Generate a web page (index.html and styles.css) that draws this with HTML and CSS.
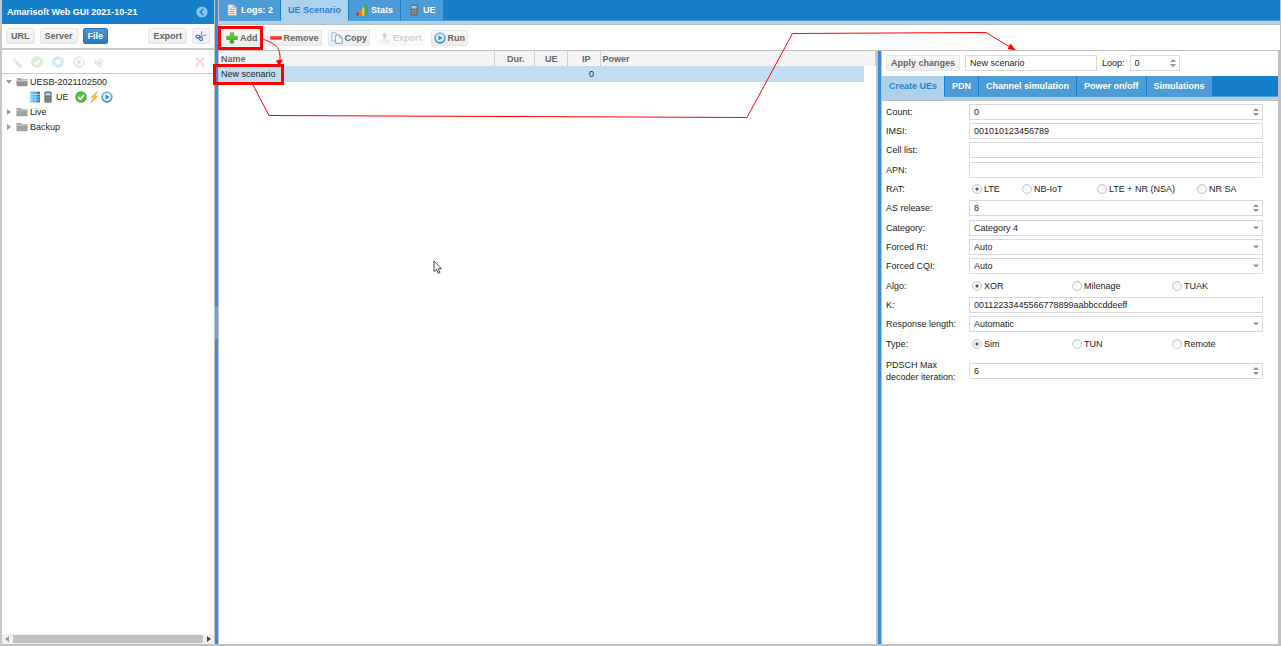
FILE: index.html
```html
<!DOCTYPE html>
<html lang="en">
<head>
<meta charset="utf-8">
<title>Amarisoft Web GUI</title>
<link rel="stylesheet" href="styles.css">
</head>
<body>
<svg class="defs" aria-hidden="true">
  <defs>
    <linearGradient id="gplus" x1="0" y1="0" x2="0" y2="1"><stop offset="0" stop-color="#7ed957"/><stop offset="1" stop-color="#2e9e1a"/></linearGradient>
    <linearGradient id="gblue" x1="0" y1="0" x2="0" y2="1"><stop offset="0" stop-color="#7cc0ea"/><stop offset="1" stop-color="#2f86c5"/></linearGradient>
    <linearGradient id="gserver" x1="0" y1="0" x2="1" y2="0"><stop offset="0" stop-color="#8fd3f7"/><stop offset="1" stop-color="#1478c4"/></linearGradient>
  </defs>
  <symbol id="i-run" viewBox="0 0 12 12"><circle cx="6" cy="6" r="5.7" fill="url(#gblue)"/><circle cx="6" cy="6" r="4" fill="#e3f3fc"/><path d="M4.5 3.4 8.6 6 4.500 8.600z" fill="#2b8acb"/></symbol>
  <symbol id="i-ok" viewBox="0 0 12 12"><circle cx="6" cy="6" r="5.700" fill="#2f9a22"/><circle cx="6" cy="6" r="4.800" fill="#62c04a"/><path d="M3.200 6.200 5.200 8.200 9 4" fill="none" stroke="#fff" stroke-width="1.700"/></symbol>
  <symbol id="i-bolt" viewBox="0 0 12 12"><path d="M9.600.4 3 6.500 5.600 7 3.200 11.700 9.400 5.400 6.600 4.900z" fill="#ffc928" stroke="#f29a1c" stroke-width=".7"/></symbol>
  <symbol id="i-plus" viewBox="0 0 12 12"><path d="M4.200.8h3.400v3.500h3.700v3.200H7.600v3.700H4.200V7.500H.6V4.300h3.600z" fill="url(#gplus)" stroke="#3d9a2b" stroke-width=".6"/></symbol>
  <symbol id="i-minus" viewBox="0 0 12 12"><path d="M.3 4h11.400v3.600H.3z" fill="#e0281e"/><path d="M.8 4.400h10.400v1.200H.8z" fill="#f5796c"/></symbol>
  <symbol id="i-copy" viewBox="0 0 12 12"><path d="M.8.8h4l2 2v6h-6z" fill="#eaf5fb" stroke="#7fb0cc" stroke-width=".8"/><path d="M4.600 3.200h4.200l2.400 2.300v5.800H4.600z" fill="#f4fafe" stroke="#5f93b5" stroke-width=".8"/><path d="M8.600 3.300v2.400h2.500" fill="none" stroke="#5f93b5" stroke-width=".8"/></symbol>
  <symbol id="i-export" viewBox="0 0 12 12"><path d="M5.500.5 8.700 4H6.900v3.200H4.200V4H2.300z" fill="#46a838"/><path d="M1 8h10v3H1z" fill="#b0b0b0"/><path d="M2 9.400h6" stroke="#fff" stroke-width=".8"/></symbol>
  <symbol id="i-doc" viewBox="0 0 12 12"><path d="M2 .8h5.400l3 2.900v7.600H2z" fill="#f4f0e8" stroke="#a9b3bb" stroke-width=".7"/><path d="M7.200.9v3h3" fill="#d6d0c4" stroke="#9aa4ac" stroke-width=".6"/><path d="M3.600 4h2.600M3.600 5.800h5M3.600 7.600h5M3.600 9.400h5" stroke="#8c98a4" stroke-width=".8"/></symbol>
  <symbol id="i-stats" viewBox="0 0 12 12"><path d="M.4 8.600h2.300v3H.4z" fill="#b33a2b"/><path d="M3.200 6.300h2.300v5.300H3.200z" fill="#ef7d1a"/><path d="M6 3.500h2.400v8.100H6z" fill="#f7c832"/><path d="M8.900.5h2.600v11.100H8.900z" fill="#4aa93b"/></symbol>
  <symbol id="i-phone" viewBox="0 0 12 12"><rect x="2.400" y=".6" width="7.200" height="11" rx="1" fill="#5b6670"/><path d="M3.400 1.800h5.200v2.800H3.400z" fill="#a9cfe8"/><path d="M3.600 6.200h4.800M3.600 8h4.800M3.600 9.800h4.800" stroke="#c4ccd2" stroke-width=".8" stroke-dasharray="1.2 .6"/></symbol>
  <symbol id="i-server" viewBox="0 0 12 12"><path d="M1 .6h10v10.800H1z" fill="url(#gserver)"/><path d="M1 3.400h10M1 6.100h10M1 8.800h10" stroke="#e4f5ff" stroke-width=".6"/><path d="M6.600.6v10.800" stroke="#bfe4fa" stroke-width=".6"/></symbol>
  <symbol id="i-folder" viewBox="0 0 12 10"><path d="M.5 1h4.300l1 1.200h5.700v7H.5z" fill="#a2a2a2"/><path d="M.5 3.100h11" stroke="#d4d4d4" stroke-width=".8"/></symbol>
  <symbol id="i-open" viewBox="0 0 12 10"><path d="M.8 1h4l1 1.200h5.600v6.900H.8z" fill="#a8a8a8"/><path d="M.2 4.200h11.600L11 9.200H1z" fill="#929292"/><path d="M.3 3.800h11.400" stroke="#e0e0e0" stroke-width=".8"/></symbol>
  <symbol id="i-cut" viewBox="0 0 12 12"><path d="M6.900 1.200 6 7.400" stroke="#8fa3b5" stroke-width="1.300" fill="none"/><path d="M11.400 5 4.400 6.400" stroke="#a9b4be" stroke-width="1.500" fill="none"/><ellipse cx="2.900" cy="6.600" rx="1.900" ry="1.400" fill="none" stroke="#3f7fc4" stroke-width="1.300"/><ellipse cx="6" cy="9" rx="1.500" ry="1.600" fill="none" stroke="#3f7fc4" stroke-width="1.300"/></symbol>
  <symbol id="i-wrench" viewBox="0 0 12 12"><path d="M6 6 10.400 10.200" stroke="#2f7fd6" stroke-width="2.800" stroke-linecap="round"/><path d="M4 4 6.500 6.500" stroke="#9aa7b2" stroke-width="1.600"/><path d="M.8 3.400a2.500 2.500 0 0 0 4.500 1A2.500 2.500 0 0 0 3.200.8L3.900 2.600 2.600 3.800z" fill="#9aa7b2"/></symbol>
  <symbol id="i-sync" viewBox="0 0 12 12"><path d="M1.700 6.600a4.200 4.200 0 0 1 7-3.600M10.300 5.400a4.200 4.200 0 0 1-7 3.600" fill="none" stroke="#3f90d6" stroke-width="3"/><path d="M6.900 5.600h4.700V.9zM5.100 6.400H.4v4.700z" fill="#3f90d6"/></symbol>
  <symbol id="i-x" viewBox="0 0 12 12"><path d="M1.500 1.500 10.500 10.500M10.500 1.500 1.500 10.500" stroke="#f0402c" stroke-width="2"/></symbol>
  <symbol id="i-collapse" viewBox="0 0 12 12"><circle cx="6" cy="6" r="5.600" fill="#8dc3e8"/><path d="M7.400 3 4.400 6l3 3" fill="none" stroke="#157fcc" stroke-width="1.600"/></symbol>
  <symbol id="i-down" viewBox="0 0 6 8"><path d="M0 2.500h6L3 5.500z" fill="#8f8f8f"/></symbol>
  <symbol id="i-spin" viewBox="0 0 6 8"><path d="M0 3h6L3 0zM0 5h6L3 8z" fill="#8f8f8f"/></symbol>
</svg>

<div class="app">
  <aside class="side">
    <header class="side-head"><h1>Amarisoft Web GUI 2021-10-21</h1><button class="plain" aria-label="Collapse"><svg class="ic"><use href="#i-collapse"/></svg></button></header>
    <div class="side-bar">
      <button class="btn">URL</button><button class="btn">Server</button><button class="btn on">File</button>
      <button class="btn push">Export</button><button class="btn square" aria-label="Cut"><svg class="ic"><use href="#i-cut"/></svg></button>
    </div>
    <div class="side-tools">
      <button class="plain" disabled aria-label="Configure"><svg class="ic"><use href="#i-wrench"/></svg></button>
      <button class="plain" disabled aria-label="Enable"><svg class="ic"><use href="#i-ok"/></svg></button>
      <button class="plain" disabled aria-label="Refresh"><svg class="ic"><use href="#i-sync"/></svg></button>
      <button class="plain" disabled aria-label="Run"><svg class="ic"><use href="#i-run"/></svg></button>
      <button class="plain" disabled aria-label="Cut"><svg class="ic"><use href="#i-cut"/></svg></button>
      <button class="plain push" disabled aria-label="Delete"><svg class="ic"><use href="#i-x"/></svg></button>
    </div>
    <ul class="tree">
      <li><svg class="tw" viewBox="0 0 6 6"><path d="M0 1h6L3 5z"/></svg><svg class="fold"><use href="#i-open"/></svg>UESB-2021102500</li>
      <li class="leaf"><svg class="ic"><use href="#i-server"/></svg><svg class="ic"><use href="#i-phone"/></svg><span class="name">UE</span><svg class="ic"><use href="#i-ok"/></svg><svg class="ic"><use href="#i-bolt"/></svg><svg class="ic"><use href="#i-run"/></svg></li>
      <li><svg class="tw" viewBox="0 0 6 6"><path d="M1 0v6L5 3z"/></svg><svg class="fold"><use href="#i-folder"/></svg>Live</li>
      <li><svg class="tw" viewBox="0 0 6 6"><path d="M1 0v6L5 3z"/></svg><svg class="fold"><use href="#i-folder"/></svg>Backup</li>
    </ul>
    <div class="hscroll"><svg class="tw" viewBox="0 0 6 6"><path d="M5 0v6L1 3z"/></svg><span class="thumb"></span><svg class="tw dark" viewBox="0 0 6 6"><path d="M1 0v6L5 3z"/></svg></div>
  </aside>
  <div class="split"><span class="grip"></span></div>

  <main class="main">
    <nav class="tabs">
      <button class="tab"><svg class="ic"><use href="#i-doc"/></svg>Logs: 2</button>
      <button class="tab active">UE Scenario</button>
      <button class="tab"><svg class="ic"><use href="#i-stats"/></svg>Stats</button>
      <button class="tab"><svg class="ic"><use href="#i-phone"/></svg>UE</button>
    </nav>
    <div class="toolbar">
      <button class="btn"><svg class="ic"><use href="#i-plus"/></svg>Add</button>
      <button class="btn"><svg class="ic"><use href="#i-minus"/></svg>Remove</button>
      <button class="btn"><svg class="ic"><use href="#i-copy"/></svg>Copy</button>
      <button class="btn" disabled><svg class="ic"><use href="#i-export"/></svg>Export</button>
      <button class="btn"><svg class="ic"><use href="#i-run"/></svg>Run</button>
    </div>
    <div class="body">
      <section class="grid">
        <table>
          <colgroup><col class="c-name"><col class="c-dur"><col class="c-num"><col class="c-num"><col class="c-power"><col class="c-end"></colgroup>
          <thead><tr><th>Name</th><th class="num">Dur.</th><th class="num">UE</th><th class="num">IP</th><th>Power</th><th></th></tr></thead>
          <tbody><tr><td>New scenario</td><td></td><td></td><td class="num">0</td><td></td><td></td></tr></tbody>
        </table>
      </section>
      <div class="split"></div>
      <section class="detail">
        <div class="detail-bar">
          <button class="btn">Apply changes</button>
          <input class="field title" type="text" value="New scenario" aria-label="Scenario name">
          <label for="loop">Loop:</label>
          <span class="ctl loop"><input class="field" id="loop" type="number" value="0"><svg class="arrow"><use href="#i-spin"/></svg></span>
        </div>
        <nav class="tabs">
          <button class="tab active">Create UEs</button>
          <button class="tab">PDN</button>
          <button class="tab">Channel simulation</button>
          <button class="tab">Power on/off</button>
          <button class="tab">Simulations</button>
        </nav>
        <form class="form">
          <div class="group">
            <div class="row"><label for="count">Count:</label><span class="ctl"><input class="field" id="count" type="number" value="0"><svg class="arrow"><use href="#i-spin"/></svg></span></div>
            <div class="row"><label for="imsi">IMSI:</label><input class="field" id="imsi" type="text" value="001010123456789"></div>
            <div class="row"><label for="cells">Cell list:</label><input class="field" id="cells" type="text"></div>
          </div>
          <div class="group">
            <div class="row"><label for="apn">APN:</label><input class="field" id="apn" type="text"></div>
            <div class="row"><span>RAT:</span><div class="radios four">
              <label><input type="radio" name="rat" checked>LTE</label><label><input type="radio" name="rat">NB-IoT</label><label><input type="radio" name="rat">LTE + NR (NSA)</label><label><input type="radio" name="rat">NR SA</label></div></div>
            <div class="row"><label for="rel">AS release:</label><span class="ctl"><input class="field" id="rel" type="number" value="8"><svg class="arrow"><use href="#i-spin"/></svg></span></div>
          </div>
          <div class="group">
            <div class="row"><label for="cat">Category:</label><span class="ctl"><select class="field" id="cat"><option>Category 4</option></select><svg class="arrow"><use href="#i-down"/></svg></span></div>
            <div class="row"><label for="ri">Forced RI:</label><span class="ctl"><select class="field" id="ri"><option>Auto</option></select><svg class="arrow"><use href="#i-down"/></svg></span></div>
            <div class="row"><label for="cqi">Forced CQI:</label><span class="ctl"><select class="field" id="cqi"><option>Auto</option></select><svg class="arrow"><use href="#i-down"/></svg></span></div>
          </div>
          <div class="group">
            <div class="row"><span>Algo:</span><div class="radios three">
              <label><input type="radio" name="algo" checked>XOR</label><label><input type="radio" name="algo">Milenage</label><label><input type="radio" name="algo">TUAK</label></div></div>
            <div class="row"><label for="k">K:</label><input class="field" id="k" type="text" value="00112233445566778899aabbccddeeff"></div>
            <div class="row"><label for="resp">Response length:</label><span class="ctl"><select class="field" id="resp"><option>Automatic</option></select><svg class="arrow"><use href="#i-down"/></svg></span></div>
          </div>
          <div class="group">
            <div class="row"><span>Type:</span><div class="radios three">
              <label><input type="radio" name="type" checked>Sim</label><label><input type="radio" name="type">TUN</label><label><input type="radio" name="type">Remote</label></div></div>
            <div class="row tall"><label for="pdsch">PDSCH Max decoder iteration:</label><span class="ctl"><input class="field" id="pdsch" type="number" value="6"><svg class="arrow"><use href="#i-spin"/></svg></span></div>
          </div>
        </form>
      </section>
    </div>
  </main>
</div>

<svg class="notes" width="1281" height="646" viewBox="0 0 1281 646" aria-hidden="true">
  <g fill="none" stroke="#f00">
    <path d="M219.500 27.500h42v21h-42zM214.500 65.500h68v18h-68z" stroke-width="3"/>
    <path d="M263 39C272 43 281 45 280 60M253 85 269 115.500 747 117.500 792.500 33.500 986 32.500 1009 46.500" stroke-width="1"/>
  </g>
  <path d="M276 60.500 283 59.500 279 66zM1016 50.500 1007.500 49 1010.500 43.500z" fill="#f00"/>
  <path d="M434 261v10.500l2.500-2.200 1.800 4 1.700-.8-1.800-3.800h3.300z" fill="#fff" stroke="#33334d" stroke-width=".9"/>
</svg>
</body>
</html>
```
FILE: styles.css
```css
* { box-sizing: border-box; }
body {
  margin: 0;
  font: 9px/12px "Liberation Sans", Arial, sans-serif;
  color: #222;
  background: #fff;
}
button, input, select { font: inherit; color: inherit; margin: 0; }
.defs { position: absolute; width: 0; height: 0; }
.notes { position: absolute; top: 0; left: 0; pointer-events: none; }

.app {
  display: flex;
  min-height: 100vh;
  border-bottom: 2px solid #c0c0c0;
}
.ic { width: 12px; height: 12px; flex: none; display: block; }
.plain { border: 0; padding: 0; background: none; }
.plain:disabled { opacity: .22; }
.push { margin-left: auto; }

.btn {
  display: flex;
  align-items: center;
  gap: 2px;
  height: 16px;
  padding: 0 4px;
  border: 1px solid #e6e6e6;
  border-radius: 2px;
  background: linear-gradient(#f8f8f8, #ededed);
  color: #666;
  font-weight: bold;
  white-space: nowrap;
}
.btn.on { background: linear-gradient(#4b97d5, #2a78bd); border-color: #2a73b3; color: #fff; }
.btn.square { padding: 0 2px; }
.btn:disabled { opacity: .3; }

/* left panel */
.side {
  display: flex;
  flex-direction: column;
  flex: none;
  width: 214px;
  border-left: 2px solid #c8c8c8;
}
.side-head {
  display: flex;
  align-items: center;
  justify-content: space-between;
  height: 24px;
  padding: 0 6px 0 5px;
  background: #157fcc;
  color: #fff;
}
.side-head h1 { margin: 0; font-size: 9px; }
.side-bar {
  display: flex;
  align-items: center;
  gap: 5px;
  height: 26px;
  padding: 0 4px;
  border-bottom: 2px solid #c8c8c8;
}
.side-tools {
  display: flex;
  align-items: center;
  gap: 9px;
  height: 24px;
  padding: 0 8px;
  border-bottom: 1px solid #c8c8c8;
}
.tree { list-style: none; flex: 1; margin: 0; padding: 0 0 0 4px; }
.tree li { display: flex; align-items: center; height: 15px; }
.tree .leaf { padding-left: 23px; gap: 1px; }
.name { padding: 0 5px 0 1px; }
.tw { width: 6px; height: 6px; flex: none; fill: #999; }
.dark { fill: #444; }
.fold { width: 12px; height: 10px; margin: 0 2px 0 4px; flex: none; }
.hscroll {
  display: flex;
  align-items: center;
  gap: 3px;
  height: 10px;
  padding: 0 2px;
  background: #f0f0f0;
}
.thumb { flex: 1; height: 8px; background: #c0c0c0; }

.split {
  display: flex;
  align-items: center;
  flex: none;
  width: 5px;
  border: solid #c4c4c4;
  border-width: 0 1px;
  background: #3b8ade;
}
.grip { width: 3px; height: 33px; background: #6ba4e6; }

/* main area */
.main { display: flex; flex-direction: column; flex: 1; min-width: 0; border-right: 1px solid #c0c0c0; }
.tabs {
  display: flex;
  gap: 1px;
  height: 25px;
  flex: none;
  border-bottom: 1px solid #c0c0c0;
  background: linear-gradient(#157fcc 20px, #4a9fdc 20px, #4a9fdc 21px, #add2ed 21px);
}
.tab {
  display: flex;
  align-items: center;
  gap: 3px;
  height: 20px;
  padding: 0 7px;
  border: 0;
  background: #4b9cd7;
  color: #fff;
  font-weight: bold;
  white-space: nowrap;
}
.tab.active { height: 21px; padding-bottom: 1px; background: #add2ed; color: #2c82ca; }
.toolbar {
  display: flex;
  align-items: center;
  gap: 6px;
  height: 26px;
  padding: 0 4px;
  border-bottom: 1px solid #c0c0c0;
}
.toolbar .btn { padding: 0 2px; }
.body { display: flex; flex: 1; }
.grid { flex: 1; min-width: 0; border-right: 1px solid #c0c0c0; }
table { width: 100%; table-layout: fixed; border-collapse: collapse; }
.c-name { width: 275px; }
.c-dur { width: 40px; }
.c-num { width: 33px; }
.c-end { width: 12px; }
th, td { height: 15px; padding: 0 2px; text-align: left; line-height: 12px; }
th { background: #f4f4f4; color: #666; border-right: 1px solid #d0d0d0; }
th:nth-child(5) { border-right: 0; }
td { height: 16px; background: #c1ddf1; }
td:last-child { background: #fff; }
th.num { text-align: right; padding-right: 9px; }
td.num { text-align: right; padding-right: 6px; }

/* scenario details */
.detail {
  display: flex;
  flex-direction: column;
  flex: none;
  width: 398px;
  border-right: 2px solid #c0c0c0;
}
.detail-bar {
  display: flex;
  align-items: center;
  gap: 5px;
  height: 25px;
  padding: 0 4px 1px;
}
.field {
  display: block;
  width: 100%;
  min-width: 0;
  height: 16px;
  padding: 0 4px;
  border: 1px solid #d9d9d9;
  border-radius: 0;
  background: #fff;
  appearance: none;
  outline: 0;
}
.field[type="number"] { appearance: textfield; }
.title { width: 132px; }
.ctl { position: relative; display: block; }
.loop { width: 50px; }
.arrow { position: absolute; right: 4px; top: 4px; width: 6px; height: 8px; pointer-events: none; }
.form { display: flex; flex-direction: column; gap: 1px; padding: 1px 15px 0 4px; }
.row { display: grid; grid-template-columns: 83px 1fr; align-items: center; min-height: 19px; }
.row.tall { min-height: 35px; }
.radios { display: grid; padding-left: 3px; }
.four { grid-template-columns: 50px 75px 100px 1fr; }
.three { grid-template-columns: 100px 100px 1fr; }
.radios label { display: flex; align-items: center; gap: 2px; white-space: nowrap; }
.radios input {
  appearance: none;
  width: 10px;
  height: 10px;
  border: 1px solid #c4c4c4;
  border-radius: 50%;
  background: linear-gradient(#f2f2f2, #fff);
}
.radios input:checked { background: radial-gradient(#555 0 1px, #f6f6f6 2px); }
```
